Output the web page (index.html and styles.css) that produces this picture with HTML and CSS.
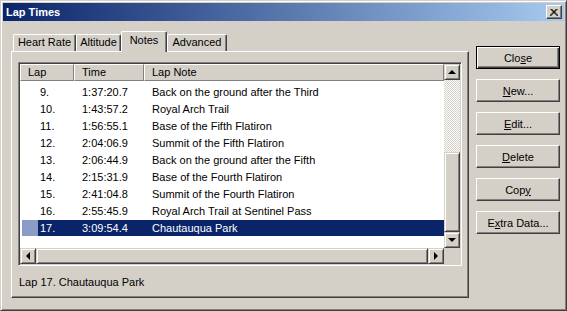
FILE: index.html
```html
<!DOCTYPE html>
<html lang="en">

<head>
    <meta charset="UTF-8">
    <title>Lap Times</title>
    <link rel="stylesheet" href="styles.css">
</head>

<body>
    <div class="window">
        <div class="title-bar">
            <span class="title">Lap Times</span>
            <button class="title-close" aria-label="Close">
                <svg width="8" height="7" viewBox="0 0 8 7">
                    <path d="M0.5 0 L7.5 7 M1.5 0 L8.5 7 M7.5 0 L0.5 7 M6.5 0 L-0.5 7" stroke="#000" stroke-width="1" fill="none"/>
                </svg>
            </button>
        </div>

        <div class="dialog-body">
            <!-- Tabbed area -->
            <div class="tabs-area">
                <div class="tab-strip">
                    <div class="tab tab-hr">Heart Rate</div>
                    <div class="tab tab-alt">Altitude</div>
                    <div class="tab tab-notes selected">Notes</div>
                    <div class="tab tab-adv">Advanced</div>
                </div>
                <div class="tab-panel">
                    <div class="list-view">
                        <div class="list-main">
                            <div class="list-header">
                                <div class="hcell col-lap">Lap</div>
                                <div class="hcell col-time">Time</div>
                                <div class="hcell col-note">Lap Note</div>
                            </div>
                            <div class="list-rows">
                                <div class="row"><span class="col-lap">9.</span><span class="col-time">1:37:20.7</span><span class="col-note">Back on the ground after the Third</span></div>
                                <div class="row"><span class="col-lap">10.</span><span class="col-time">1:43:57.2</span><span class="col-note">Royal Arch Trail</span></div>
                                <div class="row"><span class="col-lap">11.</span><span class="col-time">1:56:55.1</span><span class="col-note">Base of the Fifth Flatiron</span></div>
                                <div class="row"><span class="col-lap">12.</span><span class="col-time">2:04:06.9</span><span class="col-note">Summit of the Fifth Flatiron</span></div>
                                <div class="row"><span class="col-lap">13.</span><span class="col-time">2:06:44.9</span><span class="col-note">Back on the ground after the Fifth</span></div>
                                <div class="row"><span class="col-lap">14.</span><span class="col-time">2:15:31.9</span><span class="col-note">Base of the Fourth Flatiron</span></div>
                                <div class="row"><span class="col-lap">15.</span><span class="col-time">2:41:04.8</span><span class="col-note">Summit of the Fourth Flatiron</span></div>
                                <div class="row"><span class="col-lap">16.</span><span class="col-time">2:55:45.9</span><span class="col-note">Royal Arch Trail at Sentinel Pass</span></div>
                                <div class="row selected"><span class="col-lap">17.</span><span class="col-time">3:09:54.4</span><span class="col-note">Chautauqua Park</span></div>
                            </div>
                        </div>

                        <!-- vertical scrollbar -->
                        <div class="vscroll">
                            <div class="sb-btn"><span class="arrow up"></span></div>
                            <div class="sb-track"></div>
                            <div class="sb-thumb v"></div>
                            <div class="sb-btn"><span class="arrow down"></span></div>
                        </div>

                        <!-- horizontal scrollbar -->
                        <div class="hscroll">
                            <div class="sb-btn"><span class="arrow left"></span></div>
                            <div class="sb-thumb h"></div>
                            <div class="sb-btn"><span class="arrow right"></span></div>
                        </div>
                        <div class="sb-corner"></div>
                    </div>
                    <p class="status">Lap 17. Chautauqua Park</p>
                </div>
            </div>

            <!-- Command buttons -->
            <div class="buttons">
                <button class="btn default">Clo<u>s</u>e</button>
                <button class="btn"><u>N</u>ew...</button>
                <button class="btn"><u>E</u>dit...</button>
                <button class="btn"><u>D</u>elete</button>
                <button class="btn">Cop<u>y</u></button>
                <button class="btn">E<u>x</u>tra Data...</button>
            </div>
        </div>
    </div>
</body>

</html>
```

FILE: styles.css
```css
* {
    margin: 0;
    padding: 0;
    box-sizing: border-box;
    font-family: 'Liberation Sans', Arial, sans-serif;
}

body {
    width: 567px;
    height: 311px;
    overflow: hidden;
    background: #d4d0c8;
}

.window {
    width: 567px;
    height: 311px;
    padding: 2px;
    background: #d4d0c8;
    border: 1px solid;
    border-color: #d4d0c8 #404040 #404040 #d4d0c8;
    box-shadow: inset 1px 1px #fff, inset -1px -1px #808080;
    font-size: 11px;
    color: #000;
}

.title-bar {
    height: 18px;
    display: flex;
    align-items: center;
    justify-content: space-between;
    padding: 0 2px 0 3px;
    background: linear-gradient(to right, #0a246a, #a6caf0);
}

.title {
    color: #fff;
    font-weight: bold;
    font-size: 11px;
}

.title-close {
    width: 16px;
    height: 14px;
    display: flex;
    align-items: center;
    justify-content: center;
    background: #d4d0c8;
    border: 1px solid;
    border-color: #fff #404040 #404040 #fff;
    box-shadow: inset -1px -1px #808080;
}

.dialog-body {
    display: flex;
    padding: 10px 0 0 8px;
}

/* tabs */
.tabs-area {
    width: 458px;
}

.tab-strip {
    height: 20px;
    display: flex;
    align-items: flex-end;
    padding-left: 2px;
}

.tab {
    height: 17px;
    line-height: 15px;
    text-align: center;
    border: 1px solid;
    border-bottom: none;
    border-color: #fff #404040 #404040 #fff;
    border-radius: 2px 2px 0 0;
    box-shadow: inset -1px 0 #808080;
}

.tab.selected {
    position: relative;
    z-index: 1;
    height: 21px;
    margin-bottom: -1px;
    line-height: 17px;
    background: #d4d0c8;
}

.tab-hr { width: 63px; }
.tab-alt { width: 45px; }
.tab-notes { width: 46px; }
.tab-adv { width: 60px; }

.tab-panel {
    height: 247px;
    padding: 10px 0 0 6px;
    border: 1px solid;
    border-color: #fff #404040 #404040 #fff;
    box-shadow: inset -1px -1px #808080;
}

/* list view */
.list-view {
    width: 444px;
    height: 204px;
    padding: 1px;
    display: grid;
    grid-template-columns: 1fr 16px;
    grid-template-rows: 1fr 16px;
    background: #fff;
    border: 1px solid;
    border-color: #808080 #fff #fff #808080;
    box-shadow: inset 1px 1px #404040, inset -1px -1px #d4d0c8;
}

.list-main {
    overflow: hidden;
}

.list-header {
    height: 17px;
    display: flex;
}

.hcell {
    line-height: 15px;
    padding-left: 7px;
    background: #d4d0c8;
    border: 1px solid;
    border-color: #fff #808080 #808080 #fff;
    box-shadow: 1px 0 #404040;
}

.list-header .col-lap { width: 54px; }
.list-header .col-time { width: 70px; padding-left: 7px; }
.list-header .col-note { flex: 1; }

.list-rows {
    padding-top: 3px;
}

.row {
    height: 17px;
    line-height: 17px;
    display: flex;
    white-space: nowrap;
}

.row .col-lap {
    width: 54px;
    padding-left: 20px;
}

.row .col-time {
    width: 70px;
    padding-left: 8px;
}

.row .col-note {
    padding-left: 8px;
}

.row.selected {
    height: 16px;
    line-height: 16px;
    color: #fff;
    background: linear-gradient(to right, #fff 2px, #8b9bc6 2px 18px, #0a246a 18px);
}

/* scrollbars */
.vscroll {
    display: flex;
    flex-direction: column;
}

.hscroll {
    display: flex;
}

.sb-btn {
    width: 16px;
    height: 16px;
    flex: none;
    display: flex;
    align-items: center;
    justify-content: center;
    background: #d4d0c8;
    border: 1px solid;
    border-color: #d4d0c8 #404040 #404040 #d4d0c8;
    box-shadow: inset 1px 1px #fff, inset -1px -1px #808080;
}

.sb-track {
    height: 72px;
    background: repeating-conic-gradient(#fff 0 25%, #d4d0c8 0 50%);
    background-size: 2px 2px;
}

.sb-thumb {
    background: #d4d0c8;
    border: 1px solid;
    border-color: #d4d0c8 #404040 #404040 #d4d0c8;
    box-shadow: inset 1px 1px #fff, inset -1px -1px #808080;
}

.sb-thumb.v {
    flex: 1;
}

.sb-thumb.h {
    flex: 1;
}

.sb-corner {
    background: #d4d0c8;
}

.arrow {
    width: 0;
    height: 0;
    border: 4px solid transparent;
}

.arrow.up {
    border-bottom-color: #000;
    border-top-width: 0;
    margin-top: -1px;
}

.arrow.down {
    border-top-color: #000;
    border-bottom-width: 0;
}

.arrow.left {
    border-right-color: #000;
    border-left-width: 0;
}

.arrow.right {
    border-left-color: #000;
    border-right-width: 0;
}

.status {
    margin-top: 10px;
    padding-left: 1px;
    line-height: 13px;
}

/* command buttons */
.buttons {
    display: flex;
    flex-direction: column;
    gap: 10px;
    margin: 15px 0 0 7px;
}

.btn {
    width: 84px;
    height: 23px;
    font-size: 11px;
    color: #000;
    background: #d4d0c8;
    border: 1px solid;
    border-color: #fff #404040 #404040 #fff;
    box-shadow: inset -1px -1px #808080;
}

.btn.default {
    border-color: #000;
    box-shadow: inset 1px 1px #fff, inset -1px -1px #404040, inset -2px -2px #808080;
}
```
